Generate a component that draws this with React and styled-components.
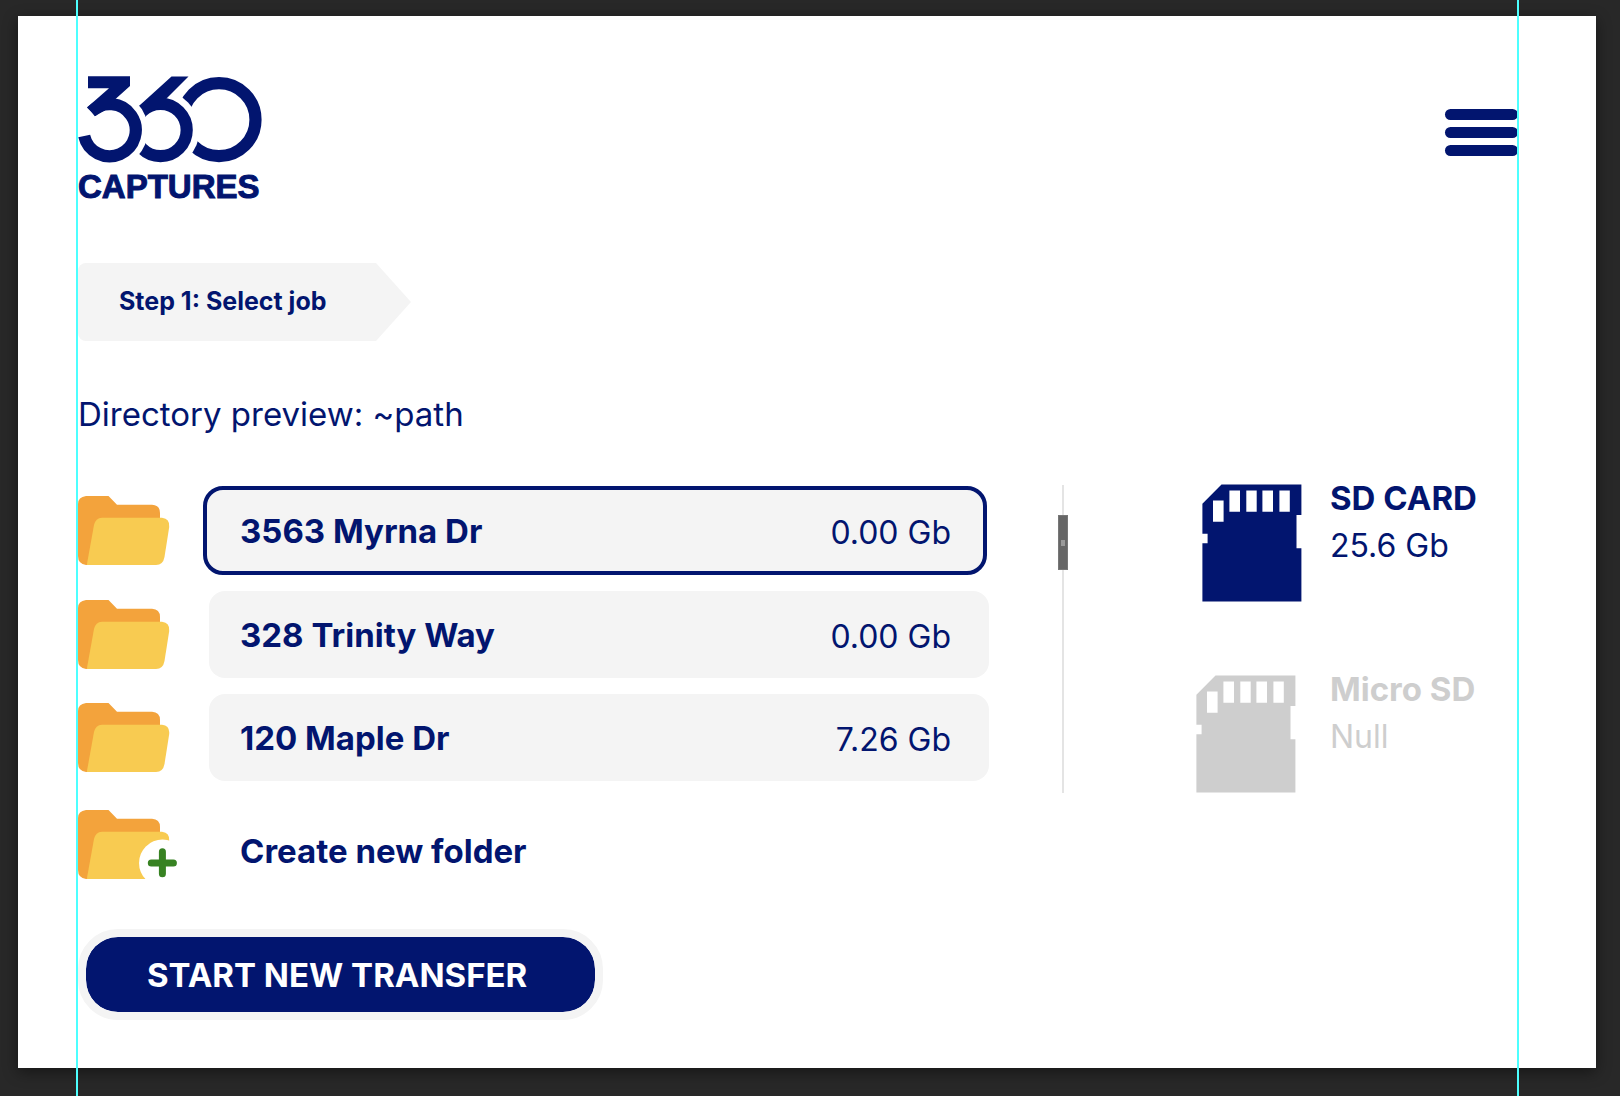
import React, { useState } from "react";
import styled, { createGlobalStyle } from "styled-components";

const navy = "#02156f";
const panel = "#f4f4f4";
const muted = "#cecece";

const GlobalStyle = createGlobalStyle`
  *, *::before, *::after { box-sizing: border-box; }
  body { margin: 0; background: #282828; }
  button { font: inherit; color: inherit; border: 0; background: none; padding: 0; cursor: pointer; }
  svg { display: block; flex: none; }
`;

const Workspace = styled.div`
  position: relative;
  display: flex;
  min-height: 100vh;
  padding: 16px 24px 28px 18px;
  background: #282828;
  font-family: Inter, "Liberation Sans", sans-serif;
  color: ${navy};
`;

const Guide = styled.div`
  position: absolute;
  top: 0;
  bottom: 0;
  width: 2px;
  background: #4dffff;
  pointer-events: none;
  ${({ $side }) => ($side === "left" ? "left: 76px;" : "right: 101px;")}
`;

const Artboard = styled.main`
  flex: 1;
  padding: 60px 78px 40px 60px;
  background: #fff;
  box-shadow: 0 4px 14px rgba(0, 0, 0, 0.45);
`;

const Header = styled.header`
  display: flex;
  justify-content: space-between;
  align-items: flex-start;
`;

const Brand = styled.a`
  display: flex;
  flex-direction: column;
  gap: 7px;
  color: inherit;
  text-decoration: none;
`;

const BrandName = styled.span`
  font: bold 33px/32px "Liberation Sans", Arial, sans-serif;
  -webkit-text-stroke: 1px ${navy};
`;

const MenuButton = styled.button`
  display: flex;
  flex-direction: column;
  gap: 7px;
  margin-top: 33px;
`;

const MenuBar = styled.span`
  width: 73px;
  height: 11px;
  border-radius: 6px;
  background: ${navy};
`;

const StepTag = styled.div`
  width: fit-content;
  min-width: 333px;
  margin-top: 60px;
  padding: 0 78px 2px 41px;
  border-radius: 8px 0 0 8px;
  background: ${panel};
  clip-path: polygon(0 0, calc(100% - 35px) 0, 100% 50%, calc(100% - 35px) 100%, 0 100%);
  font-size: 25px;
  font-weight: 700;
  line-height: 76px;
  white-space: nowrap;
`;

const Title = styled.h1`
  margin: 53px 0 50px;
  font-size: 33px;
  font-weight: 400;
  line-height: 40px;
`;

const Browser = styled.section`
  display: flex;
  align-items: flex-start;
`;

const FolderList = styled.ul`
  flex: 1;
  display: flex;
  flex-direction: column;
  gap: 16px;
  margin: 0;
  padding: 2px 0 0;
  list-style: none;
`;

const FolderItem = styled.li`
  display: grid;
  grid-template-columns: 99px 1fr;
  column-gap: 32px;
  align-items: center;
`;

const FolderButton = styled.button`
  display: flex;
  justify-content: space-between;
  align-items: center;
  min-height: 87px;
  padding: 0 38px 0 31px;
  border-radius: 16px;
  background: ${panel};
  line-height: 40px;
  text-align: left;

  &[aria-pressed="true"] {
    min-height: 89px;
    margin: 0 2px 0 -6px;
    padding: 0 32px 0 33px;
    border: 4px solid ${navy};
    border-radius: 20px;
  }
`;

const FolderName = styled.span`
  font-size: 33px;
  font-weight: 700;
`;

const FolderSize = styled.span`
  padding-top: 4px;
  font-size: 32px;
`;

const CreateButton = styled.button`
  min-height: 95px;
  padding: 12px 0 0 31px;
  font-size: 33px;
  font-weight: 700;
  line-height: 40px;
  text-align: left;
`;

const ScrollTrack = styled.div`
  width: 10px;
  height: 308px;
  margin: 1px 128px 0 69px;
  padding-top: 30px;
  background: linear-gradient(#e4e4e4, #e4e4e4) center / 2px 100% no-repeat;
`;

const ScrollThumb = styled.div`
  display: grid;
  place-items: center;
  height: 55px;
  border: 1px solid #777;
  background: #666;

  &::before {
    content: "";
    width: 4px;
    height: 6px;
    background: #999;
  }
`;

const DeviceList = styled.div`
  display: flex;
  flex-direction: column;
  gap: 73px;
  width: 322px;
`;

const Device = styled.div`
  display: grid;
  grid-template-columns: 106px 1fr;
  column-gap: 28px;
  justify-items: start;
  color: ${({ $active }) => ($active ? navy : muted)};

  svg { justify-self: ${({ $active }) => ($active ? "end" : "start")}; }
`;

const DeviceText = styled.div`
  display: flex;
  flex-direction: column;
  gap: 20px;
  font-size: 32px;
  line-height: 28px;
  white-space: nowrap;
`;

const DeviceName = styled.strong`
  font-size: 33px;
  font-weight: 700;
`;

const StartButton = styled.button`
  min-width: 525px;
  min-height: 91px;
  margin-top: 37px;
  padding: 0 62px 0 61px;
  border: 8px solid ${panel};
  border-radius: 40px;
  background: ${navy};
  background-clip: padding-box;
  color: #fff;
  font-size: 33px;
  font-weight: 700;
  text-align: left;
  white-space: nowrap;
`;

function LogoMark() {
  return (
    <svg width="184" height="88" viewBox="78 76 184 88" aria-hidden="true">
      <g fill="none" stroke={navy} strokeWidth="12.2">
        <circle cx="219" cy="119.7" r="36.5" />
        <circle cx="160.5" cy="130" r="39" fill="#fff" stroke="none" />
        <circle cx="160.5" cy="130" r="26.2" />
      </g>
      <path fill={navy} d="M171.5 76.6H188.5L166 99L160 108L147 113L140 120L134 110.5Z" />
      <circle cx="109.5" cy="130" r="38.4" fill="#fff" />
      <path fill="none" stroke={navy} strokeWidth="12.2" d="M84.2 136A26.1 26.1 0 1 0 91.2 111.7" />
      <path fill={navy} d="M88 76.3H130V86L115.5 99L109 108L94.8 116.2L87.6 107L109 88.3H88Z" />
    </svg>
  );
}

function FolderIcon({ withBadge }) {
  return (
    <svg width="99" height="70" viewBox="0 0 99 70" aria-hidden="true">
      <path fill="#f3a33c" d="M8 0H30.5L39 8.7H74Q82 9 82 17V40L60 69H8Q0 68 0 60V8Q0 1 8 0Z" />
      <path fill="#f8cb51" d="M24 21.7H84Q92 22.5 91.2 31L86.5 61Q85 69 78 69H8.8L16 29Q17.5 22 24 21.7Z" />
      {withBadge && (
        <>
          <circle cx="84.5" cy="53" r="23.5" fill="#fff" />
          <path d="M84.4 41.8V63.8M73.3 53H95.4" stroke="#378222" strokeWidth="7" strokeLinecap="round" />
        </>
      )}
    </svg>
  );
}

function CardIcon() {
  return (
    <svg width="100" height="118" viewBox="0 0 100 118" aria-hidden="true">
      <path
        fill="currentColor"
        fillRule="evenodd"
        d="M19.5 0.6H99.4V31H94.5V64.3H99.4V117.6H0.4V59.3H5.6V49.7H0.4V19.7ZM11 16.4H21.6V37.8H11ZM27.4 6.4H38V27.7H27.4ZM44.3 6.4H54.7V27.7H44.3ZM60.4 6.4H71V27.7H60.4ZM77.4 6.4H87.8V27.7H77.4Z"
      />
    </svg>
  );
}

const folders = [
  { name: "3563 Myrna Dr", size: "0.00 Gb" },
  { name: "328 Trinity Way", size: "0.00 Gb" },
  { name: "120 Maple Dr", size: "7.26 Gb" },
];

const devices = [
  { name: "SD CARD", space: "25.6 Gb", active: true },
  { name: "Micro SD", space: "Null", active: false },
];

export default function App() {
  const [selected, setSelected] = useState(folders[0].name);

  return (
    <Workspace>
      <GlobalStyle />
      <Artboard>
        <Header>
          <Brand href="#" aria-label="360 Captures">
            <LogoMark />
            <BrandName>CAPTURES</BrandName>
          </Brand>
          <MenuButton type="button" aria-label="Menu">
            <MenuBar />
            <MenuBar />
            <MenuBar />
          </MenuButton>
        </Header>

        <StepTag>Step 1: Select job</StepTag>
        <Title>Directory preview: ~path</Title>

        <Browser>
          <FolderList>
            {folders.map(({ name, size }) => (
              <FolderItem key={name}>
                <FolderIcon />
                <FolderButton
                  type="button"
                  aria-pressed={selected === name}
                  onClick={() => setSelected(name)}
                >
                  <FolderName>{name}</FolderName>
                  <FolderSize>{size}</FolderSize>
                </FolderButton>
              </FolderItem>
            ))}
            <FolderItem>
              <FolderIcon withBadge />
              <CreateButton type="button">Create new folder</CreateButton>
            </FolderItem>
          </FolderList>

          <ScrollTrack>
            <ScrollThumb />
          </ScrollTrack>

          <DeviceList>
            {devices.map(({ name, space, active }) => (
              <Device key={name} $active={active}>
                <CardIcon />
                <DeviceText>
                  <DeviceName>{name}</DeviceName>
                  <span>{space}</span>
                </DeviceText>
              </Device>
            ))}
          </DeviceList>
        </Browser>

        <StartButton type="button">START NEW TRANSFER</StartButton>
      </Artboard>
      <Guide $side="left" />
      <Guide $side="right" />
    </Workspace>
  );
}
